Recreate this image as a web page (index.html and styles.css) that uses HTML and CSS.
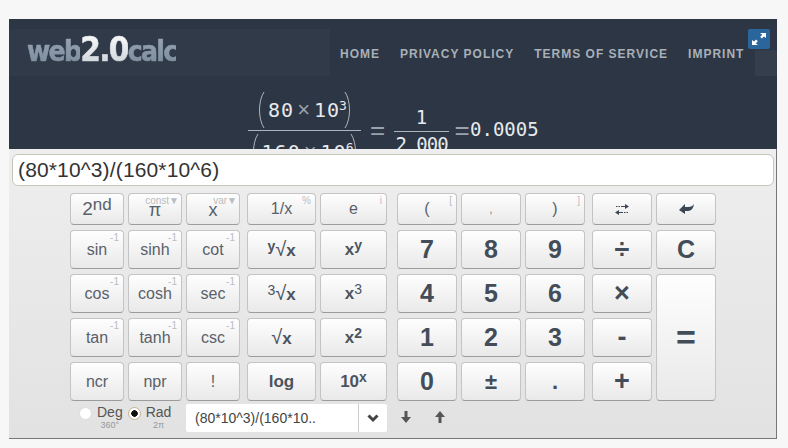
FILE: index.html
```html
<!DOCTYPE html>
<html lang="en">
<head>
  <meta charset="UTF-8" />
  <meta name="viewport" content="width=device-width, initial-scale=1.0">
  <title>web2.0calc</title>
  <link rel="stylesheet" href="styles.css">
</head>
<body>
  <div class="frame">
    <header class="top">
      <div class="logo"><span class="logo-dim">web</span><span class="logo-bright">2.0</span><span class="logo-dim">calc</span></div>
      <nav class="nav">
        <a>HOME</a>
        <a>PRIVACY POLICY</a>
        <a>TERMS OF SERVICE</a>
        <a>IMPRINT</a>
      </nav>
      <div class="tile"></div>
      <div class="expand">
        <svg width="16" height="14" viewBox="0 0 16 14"><path fill="#fff" d="M9 1h6v5l-2-1.6-2.2 2-1.6-1.6 2-2zM7 13H1V8l2 1.6 2.2-2 1.6 1.6-2 2z"/></svg>
      </div>
    </header>

    <div class="result">
      <div class="math">
        <div class="frac frac-wide">
          <div class="num">
            <svg class="paren" width="10" height="38" viewBox="0 0 10 38"><path d="M8 1C2 10 2 28 8 37" fill="none" stroke="#aeb4bb"/></svg>
            <span class="digits">80</span><span class="times">×</span><span class="digits">10<sup>3</sup></span>
            <svg class="paren paren-close" width="10" height="38" viewBox="0 0 10 38"><path d="M2 1C8 10 8 28 2 37" fill="none" stroke="#aeb4bb"/></svg>
          </div>
          <div class="den">
            <svg class="paren" width="10" height="38" viewBox="0 0 10 38"><path d="M8 1C2 10 2 28 8 37" fill="none" stroke="#aeb4bb"/></svg>
            <span class="digits">160</span><span class="times">×</span><span class="digits">10<sup>6</sup></span>
            <svg class="paren paren-close" width="10" height="38" viewBox="0 0 10 38"><path d="M2 1C8 10 8 28 2 37" fill="none" stroke="#aeb4bb"/></svg>
          </div>
        </div>
        <span class="eq eq-first">=</span>
        <div class="frac frac-small">
          <div class="num"><span>1</span></div>
          <div class="den"><span>2 000</span></div>
        </div>
        <span class="eq eq-second">=</span>
        <span class="answer">0.0005</span>
      </div>
    </div>

    <div class="panel">
      <div class="entry">(80*10^3)/(160*10^6)</div>

      <div class="pad">
        <div class="group group-trig">
          <button class="key"><span class="second">2<sup>nd</sup></span></button>
          <button class="key key-low"><i class="note note-menu">const▼</i>π</button>
          <button class="key key-low"><i class="note note-menu">var▼</i>x</button>
          <button class="key">sin<i class="note">-1</i></button>
          <button class="key">sinh<i class="note">-1</i></button>
          <button class="key">cot<i class="note">-1</i></button>
          <button class="key">cos<i class="note">-1</i></button>
          <button class="key">cosh<i class="note">-1</i></button>
          <button class="key">sec<i class="note">-1</i></button>
          <button class="key">tan<i class="note">-1</i></button>
          <button class="key">tanh<i class="note">-1</i></button>
          <button class="key">csc<i class="note">-1</i></button>
          <button class="key">ncr</button>
          <button class="key">npr</button>
          <button class="key">!</button>
        </div>

        <div class="group group-power">
          <button class="key">1/x<i class="note">%</i></button>
          <button class="key">e<i class="note">i</i></button>
          <button class="key key-bold"><span><sup>y</sup><span class="root">√</span>x</span></button>
          <button class="key key-bold"><span>x<sup>y</sup></span></button>
          <button class="key key-bold"><span><sup class="thin">3</sup><span class="root">√</span>x</span></button>
          <button class="key key-bold"><span>x<sup class="thin">3</sup></span></button>
          <button class="key key-bold"><span><span class="root">√</span>x</span></button>
          <button class="key key-bold"><span>x<sup>2</sup></span></button>
          <button class="key key-bold">log</button>
          <button class="key key-bold"><span>10<sup>x</sup></span></button>
        </div>

        <div class="group group-digits">
          <button class="key">(<i class="note">[</i></button>
          <button class="key key-tiny">,</button>
          <button class="key">)<i class="note">]</i></button>
          <button class="key key-num">7</button>
          <button class="key key-num">8</button>
          <button class="key key-num">9</button>
          <button class="key key-num">4</button>
          <button class="key key-num">5</button>
          <button class="key key-num">6</button>
          <button class="key key-num">1</button>
          <button class="key key-num">2</button>
          <button class="key key-num">3</button>
          <button class="key key-num">0</button>
          <button class="key key-num key-mid">±</button>
          <button class="key key-num key-dot">.</button>
        </div>

        <div class="group group-ops">
          <button class="key">
            <svg width="14" height="11" viewBox="0 0 14 11"><path fill="#3d4753" d="M1 2h1.500v1H1zM3.500 2H5v1H3.500zM6 2h4V0l4 2.500L10 5V3H6zM4 6v2h4v1H4v2L0 8.500zM9 8h1.500v1H9zM11.500 8H13v1h-1.500z"/></svg>
          </button>
          <button class="key">
            <svg width="15" height="12" viewBox="0 0 15 12"><path fill="#3d4753" d="M0 7l6-6v3h3c3 0 5-1 6-3-.5 4-2.500 7-6 7H6v3z"/></svg>
          </button>
          <button class="key key-num key-sign">÷</button>
          <button class="key key-num">C</button>
          <button class="key key-num key-sign">×</button>
          <button class="key key-num key-equals">=</button>
          <button class="key key-num key-sign">-</button>
          <button class="key key-num key-sign">+</button>
        </div>
      </div>

      <div class="footer">
        <div class="modes">
          <label class="mode">
            <span class="radio"></span>
            <span class="mode-text">Deg<small>360°</small></span>
          </label>
          <label class="mode">
            <span class="radio radio-on"></span>
            <span class="mode-text">Rad<small>2π</small></span>
          </label>
        </div>
        <div class="history">
          <span class="history-text">(80*10^3)/(160*10..</span>
          <span class="history-drop">
            <svg width="12" height="9" viewBox="0 0 12 9"><path fill="none" stroke="#444" stroke-width="3" d="M1.500 1.500L6 6l4.500-4.500"/></svg>
          </span>
        </div>
        <div class="steps">
          <svg width="10" height="12" viewBox="0 0 10 12"><path fill="#555" d="M3.500 0h3v6H10l-5 6-5-6h3.500z"/></svg>
          <svg width="10" height="12" viewBox="0 0 10 12"><path fill="#555" d="M3.500 12h3V6H10L5 0 0 6h3.500z"/></svg>
        </div>
      </div>
    </div>
  </div>
</body>
</html>
```

FILE: styles.css
```css
html, body {
  margin: 0;
  padding: 0;
  height: 100%;
  overflow: hidden;
  background: #f7f7f7;
  font-family: "Liberation Sans", Arial, sans-serif;
}
.frame {
  position: relative;
  width: 768px;
  height: 420px;
  margin: 19px 0 0 9px;
  background: #2c3644;
}

/* header */
.top {
  display: flex;
  height: 57px;
  box-sizing: border-box;
  padding-top: 10px;
}
.logo {
  width: 321px;
  box-sizing: border-box;
  padding: 3px 0 0 18px;
  background: #303a49;
  font-family: "DejaVu Sans", sans-serif;
  font-stretch: condensed;
  font-weight: bold;
  font-size: 28px;
  letter-spacing: -1.7px;
  line-height: 36px;
  -webkit-text-stroke: 0.6px transparent;
}
.logo-dim {
  background: linear-gradient(#98a6b4, #7a8a9b);
  -webkit-background-clip: text;
  background-clip: text;
  color: transparent;
}
.logo-bright {
  background: linear-gradient(#fff, #c8ced6);
  -webkit-background-clip: text;
  background-clip: text;
  color: transparent;
  font-size: 33px;
}
.nav {
  display: flex;
  gap: 20px;
  width: 425px;
  box-sizing: border-box;
  padding: 18px 0 0 10px;
  background: #2c3644;
  color: #a9b0b8;
  font-size: 12px;
  font-weight: bold;
  letter-spacing: 1px;
  line-height: 14px;
  white-space: nowrap;
}
.tile {
  width: 22px;
  height: 26px;
  margin-top: 21px;
  background: #343e4d;
}
.expand {
  position: absolute;
  top: 10px;
  left: 739px;
  width: 22px;
  height: 20px;
  display: flex;
  align-items: center;
  justify-content: center;
  border-radius: 2px;
  background: #2a659c;
}

/* result */
.result {
  height: 73px;
  box-sizing: border-box;
  padding-top: 13px;
  overflow: hidden;
  color: #e6e9ec;
  font-family: "DejaVu Sans Mono", monospace;
  font-size: 19px;
}
.math {
  display: flex;
  align-items: center;
  justify-content: center;
}
.frac {
  display: flex;
  flex-direction: column;
  align-items: center;
}
.frac-wide {
  width: 113px;
}
.frac-small {
  width: 55px;
}
.num, .den {
  display: flex;
  align-items: center;
  justify-content: center;
  height: 41px;
  white-space: nowrap;
}
.num {
  width: 100%;
  border-bottom: 1px solid #aeb4bb;
}
.den {
  width: 100%;
}
.paren {
  margin-right: 2px;
}
.paren-close {
  margin: 0 0 0 -5px;
}
.digits {
  font-size: 20px;
  letter-spacing: 1px;
}
.frac-small .num {
  align-items: flex-end;
  padding-bottom: 3px;
  height: 38px;
}
.frac-small .den {
  align-items: flex-start;
  padding-top: 1px;
  height: 38px;
}
.frac-small .den span {
  letter-spacing: -1px;
}
.digits sup {
  margin-left: -1px;
  font-size: 13px;
  line-height: 0;
  vertical-align: 7px;
}
.times {
  margin: 0 4px 0 3px;
  color: #9aa2ab;
  font-family: "Liberation Sans", sans-serif;
  font-size: 22px;
}
.eq {
  text-align: center;
  color: #9aa2ab;
  font-family: "Liberation Sans", sans-serif;
  font-size: 26px;
}
.eq-first {
  width: 33px;
}
.eq-second {
  width: 22px;
  margin-left: 2px;
}
.answer {
  width: 68px;
  margin-top: -3px;
  margin-left: -3px;
}

/* calculator */
.panel {
  height: 290px;
  box-sizing: border-box;
  padding: 5px 2px 0 3px;
  background: linear-gradient(#eeeeee, #e2e2e2);
  border-right: 1px solid #777;
  border-bottom: 1px solid #777;
}
.entry {
  box-sizing: border-box;
  height: 32px;
  padding-left: 5px;
  background: #fff;
  border: 1px solid #c9c6b8;
  border-radius: 6px;
  color: #333;
  font-size: 21px;
  letter-spacing: 0.15px;
  line-height: 30px;
}
.pad {
  display: flex;
  padding: 7px 0 0 58px;
}
.group {
  display: grid;
  grid-template-rows: 32px repeat(4, 39px);
  gap: 5px 4px;
}
.group-trig {
  grid-template-columns: repeat(3, 54px);
  margin-right: 7px;
}
.group-power {
  grid-template-columns: 69px 67px;
  margin-right: 10px;
}
.group-digits {
  grid-template-columns: repeat(3, 60px);
  margin-right: 7px;
}
.group-ops {
  grid-template-columns: repeat(2, 60px);
}
.key {
  position: relative;
  padding: 0;
  display: flex;
  align-items: center;
  justify-content: center;
  background: linear-gradient(#fefefe, #e9e9e9);
  border: 1px solid #c4c4c4;
  border-bottom-color: #9c9c9c;
  border-radius: 4px;
  color: #59616a;
  font-family: "Liberation Sans", sans-serif;
  font-size: 16px;
}
.key sup {
  font-size: 14px;
  line-height: 0;
  vertical-align: 5px;
}
.key-low {
  padding-top: 3px;
  font-size: 18px;
}
.second {
  font-size: 19px;
}
.second sup {
  font-size: 17px;
  vertical-align: 5px;
}
.key-bold {
  color: #4a545f;
  font-size: 17px;
  font-weight: bold;
}
.key-bold sup.thin {
  font-weight: normal;
}
.root {
  font-size: 20px;
  font-weight: normal;
}
.key-num {
  color: #434d59;
  font-size: 25px;
  font-weight: bold;
}
.key-sign {
  font-size: 27px;
}
.key-mid {
  font-size: 22px;
}
.key-dot {
  font-size: 22px;
}
.key-tiny {
  font-size: 10px;
}
.key-equals {
  grid-column: 2;
  grid-row: 3 / 6;
  font-size: 34px;
}
.group-ops .key-sign:nth-of-type(7) {
  grid-column: 1;
  grid-row: 4;
}
.group-ops .key-sign:nth-of-type(8) {
  grid-column: 1;
  grid-row: 5;
}
.note {
  position: absolute;
  top: 1px;
  right: 4px;
  color: #b9bdc2;
  font-size: 10px;
  font-style: normal;
  font-weight: normal;
  line-height: 11px;
}
.note-menu {
  right: 2px;
  white-space: nowrap;
}

/* bottom row */
.footer {
  display: flex;
  align-items: flex-start;
  padding: 3px 0 0 67px;
}
.modes {
  display: flex;
  gap: 5px;
  width: 107px;
}
.mode {
  display: flex;
  gap: 5px;
  color: #555;
  font-size: 14px;
}
.radio {
  width: 13px;
  height: 13px;
  margin-top: 3px;
  box-sizing: border-box;
  border-radius: 50%;
  background: #fff;
  border: 1px solid #ddd;
}
.radio-on {
  background: radial-gradient(circle, #111 0 3px, #fff 3.500px);
  border-color: #c9b48a;
}
.mode-text {
  display: flex;
  flex-direction: column;
  align-items: center;
  line-height: 16px;
}
.mode-text small {
  color: #999;
  font-size: 9px;
  line-height: 11px;
}
.history {
  display: flex;
  width: 201px;
  height: 28px;
  background: #fff;
  border-radius: 2px;
  color: #444;
  font-size: 14px;
  line-height: 28px;
}
.history-text {
  width: 173px;
  box-sizing: border-box;
  padding-left: 9px;
  border-right: 1px solid #ccc;
}
.history-drop {
  display: flex;
  flex: 1;
  align-items: center;
  justify-content: center;
}
.steps {
  display: flex;
  gap: 24px;
  padding: 7px 0 0 14px;
}
```
